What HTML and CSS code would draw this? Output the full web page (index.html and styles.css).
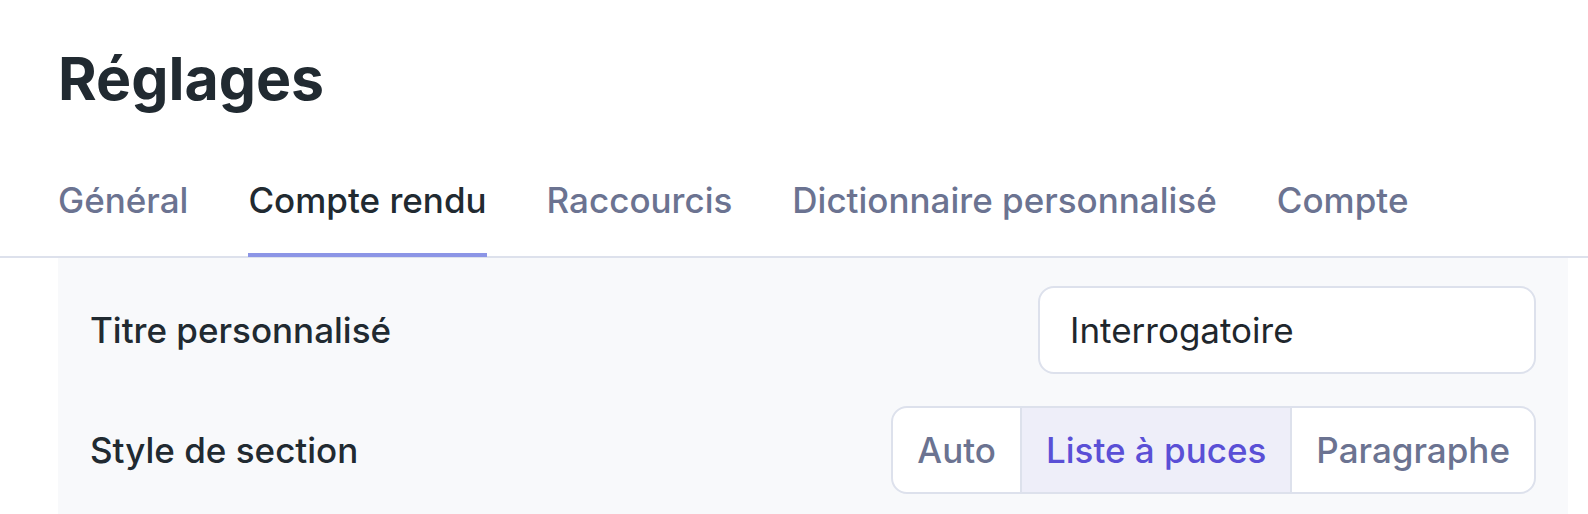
FILE: index.html
```html
<!DOCTYPE html>
<html lang="fr">
<head>
<meta charset="utf-8">
<title>Réglages</title>
<link rel="stylesheet" href="styles.css">
</head>
<body>
<header class="header">
  <h1 class="title">Réglages</h1>
</header>
<nav class="tabs">
  <a class="tab">Général</a>
  <a class="tab tab-active">Compte rendu</a>
  <a class="tab">Raccourcis</a>
  <a class="tab">Dictionnaire personnalisé</a>
  <a class="tab">Compte</a>
</nav>
<main class="panel">
  <div class="row">
    <label class="label">Titre personnalisé</label>
    <div class="input">Interrogatoire</div>
  </div>
  <div class="row">
    <span class="label">Style de section</span>
    <div class="segmented">
      <span class="seg">Auto</span>
      <span class="seg seg-active">Liste à puces</span>
      <span class="seg">Paragraphe</span>
    </div>
  </div>
</main>
</body>
</html>
```

FILE: styles.css
```css
html, body {
  margin: 0;
  padding: 0;
  background: #ffffff;
}
body {
  font-family: Inter, "Noto Sans", sans-serif;
  color: #212a31;
}
.header {
  padding: 43px 0 0 58px;
}
.title {
  margin: 0;
  font-size: 59px;
  line-height: 72px;
  font-weight: 700;
  color: #212a31;
}
.tabs {
  display: flex;
  gap: 60px;
  margin-top: 64px;
  padding-left: 58px;
  border-bottom: 2px solid #dde1ec;
}
.tab {
  font-size: 35px;
  line-height: 42px;
  font-weight: 500;
  color: #6b7391;
  padding-bottom: 32px;
  border-bottom: 4px solid transparent;
  margin-bottom: -1px;
}
.tab-active {
  color: #212a31;
  border-bottom-color: #8c95e6;
}
.panel {
  margin: 0 20px 0 58px;
  background: #f8f9fb;
  padding: 28px 32px 28px 32px;
  display: flex;
  flex-direction: column;
  gap: 32px;
}
.row {
  display: flex;
  align-items: center;
  justify-content: space-between;
}
.label {
  font-size: 35px;
  font-weight: 500;
  color: #212a31;
}
.input {
  box-sizing: border-box;
  width: 498px;
  height: 88px;
  border: 2px solid #dde1ec;
  border-radius: 16px;
  background: #ffffff;
  padding: 0 30px;
  display: flex;
  align-items: center;
  font-size: 35px;
  color: #1f272d;
}
.segmented {
  display: flex;
  height: 88px;
  box-sizing: border-box;
  border: 2px solid #dde1ec;
  border-radius: 16px;
  background: #ffffff;
  overflow: hidden;
}
.seg {
  display: flex;
  align-items: center;
  padding: 0 24px;
  font-size: 35px;
  font-weight: 500;
  color: #6b7391;
}
.seg + .seg {
  border-left: 2px solid #dde1ec;
}
.seg-active {
  background: #eeeef9;
  color: #5a4fd6;
}
```
